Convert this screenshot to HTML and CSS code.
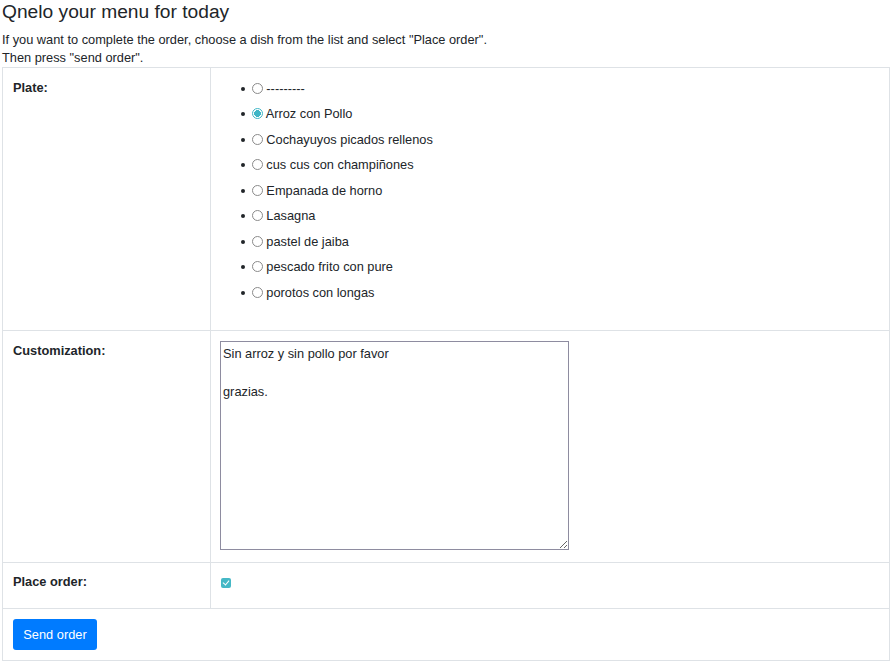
FILE: index.html
```html
<!DOCTYPE html>
<html>
<head>
<meta charset="utf-8">
<link rel="stylesheet" href="styles.css">
</head>
<body>
<h4 class="title">Qnelo your menu for today</h4>
<p class="intro">If you want to complete the order, choose a dish from the list and select "Place order".<br>Then press "send order".</p>
<form>
<table class="order">
<tr class="row-plate">
<th class="label">Plate:</th>
<td class="field">
<ul class="plates">
<li><label><input type="radio" name="plate" class="radio"> ---------</label></li>
<li><label><input type="radio" name="plate" class="radio" checked> Arroz con Pollo</label></li>
<li><label><input type="radio" name="plate" class="radio"> Cochayuyos picados rellenos</label></li>
<li><label><input type="radio" name="plate" class="radio"> cus cus con champiñones</label></li>
<li><label><input type="radio" name="plate" class="radio"> Empanada de horno</label></li>
<li><label><input type="radio" name="plate" class="radio"> Lasagna</label></li>
<li><label><input type="radio" name="plate" class="radio"> pastel de jaiba</label></li>
<li><label><input type="radio" name="plate" class="radio"> pescado frito con pure</label></li>
<li><label><input type="radio" name="plate" class="radio"> porotos con longas</label></li>
</ul>
</td>
</tr>
<tr class="row-custom">
<th class="label">Customization:</th>
<td class="field"><textarea class="notes">Sin arroz y sin pollo por favor

grazias.</textarea></td>
</tr>
<tr class="row-place">
<th class="label">Place order:</th>
<td class="field"><input type="checkbox" class="check" checked></td>
</tr>
<tr class="row-send">
<td colspan="2" class="send-cell"><button type="button" class="btn">Send order</button></td>
</tr>
</table>
</form>
</body>
</html>
```
FILE: styles.css
```css
html, body {
  margin: 0;
  padding: 0;
  background: #fff;
}
body {
  font-family: "Liberation Sans", Arial, sans-serif;
  font-size: 12.8px;
  color: #212529;
  padding: 0 2px;
  width: 888px;
}
.title {
  font-size: 19.2px;
  font-weight: 400;
  line-height: 23px;
  margin: 0 0 8px 0;
}
.intro {
  margin: 0;
  line-height: 18px;
}
.order {
  border-collapse: collapse;
  width: 888px;
}
.order th, .order td {
  border: 1px solid #dee2e6;
  vertical-align: top;
  padding: 10px;
  text-align: left;
}
.label {
  width: 187px;
  font-weight: 700;
  line-height: 18px;
}
.row-plate .label,
.row-custom .label {
  padding-top: 11px;
}
.field {
  line-height: 18px;
}
.plates {
  margin: 0 0 18px 0;
  padding: 1.5px 0 0 20px;
  line-height: 18px;
  list-style-position: inside;
}
.plates li {
  margin-bottom: 7.5px;
}
.radio {
  appearance: none;
  -webkit-appearance: none;
  box-sizing: border-box;
  width: 11px;
  height: 11px;
  margin: 0 0 0 -7px;
  border: 1px solid #8a8a8a;
  border-radius: 50%;
  background: #fff;
  vertical-align: -1px;
}
.radio:checked {
  border-color: #3fb6c6;
  background: radial-gradient(circle, #3fb6c6 0 3.2px, #fff 3.6px);
}
.notes {
  display: block;
  width: 349px;
  height: 209px;
  box-sizing: border-box;
  font-family: "Liberation Sans", Arial, sans-serif;
  font-size: 12.8px;
  line-height: 19px;
  color: #212529;
  border: 1px solid #8e8ca0;
  padding: 2px 2px 1px 2px;
  margin: 0 0 2px -1px;
}
.row-place .label {
  padding-bottom: 17px;
}
.check {
  appearance: none;
  -webkit-appearance: none;
  position: relative;
  box-sizing: border-box;
  width: 10px;
  height: 10px;
  margin: 5px 0 0 0;
  border-radius: 2px;
  background: #45b8c6;
  display: block;
}
.check::after {
  content: "";
  position: absolute;
  left: 3px;
  top: 1px;
  width: 3px;
  height: 5px;
  border: solid #fff;
  border-width: 0 1.5px 1.5px 0;
  transform: rotate(40deg);
}
.send-cell {
  padding: 9px 10px 9px 10px;
}
.btn {
  display: block;
  background: #007bff;
  color: #fff;
  border: none;
  border-radius: 3px;
  font-family: "Liberation Sans", Arial, sans-serif;
  font-size: 12.8px;
  width: 84px;
  height: 31px;
  padding: 0;
}
```
